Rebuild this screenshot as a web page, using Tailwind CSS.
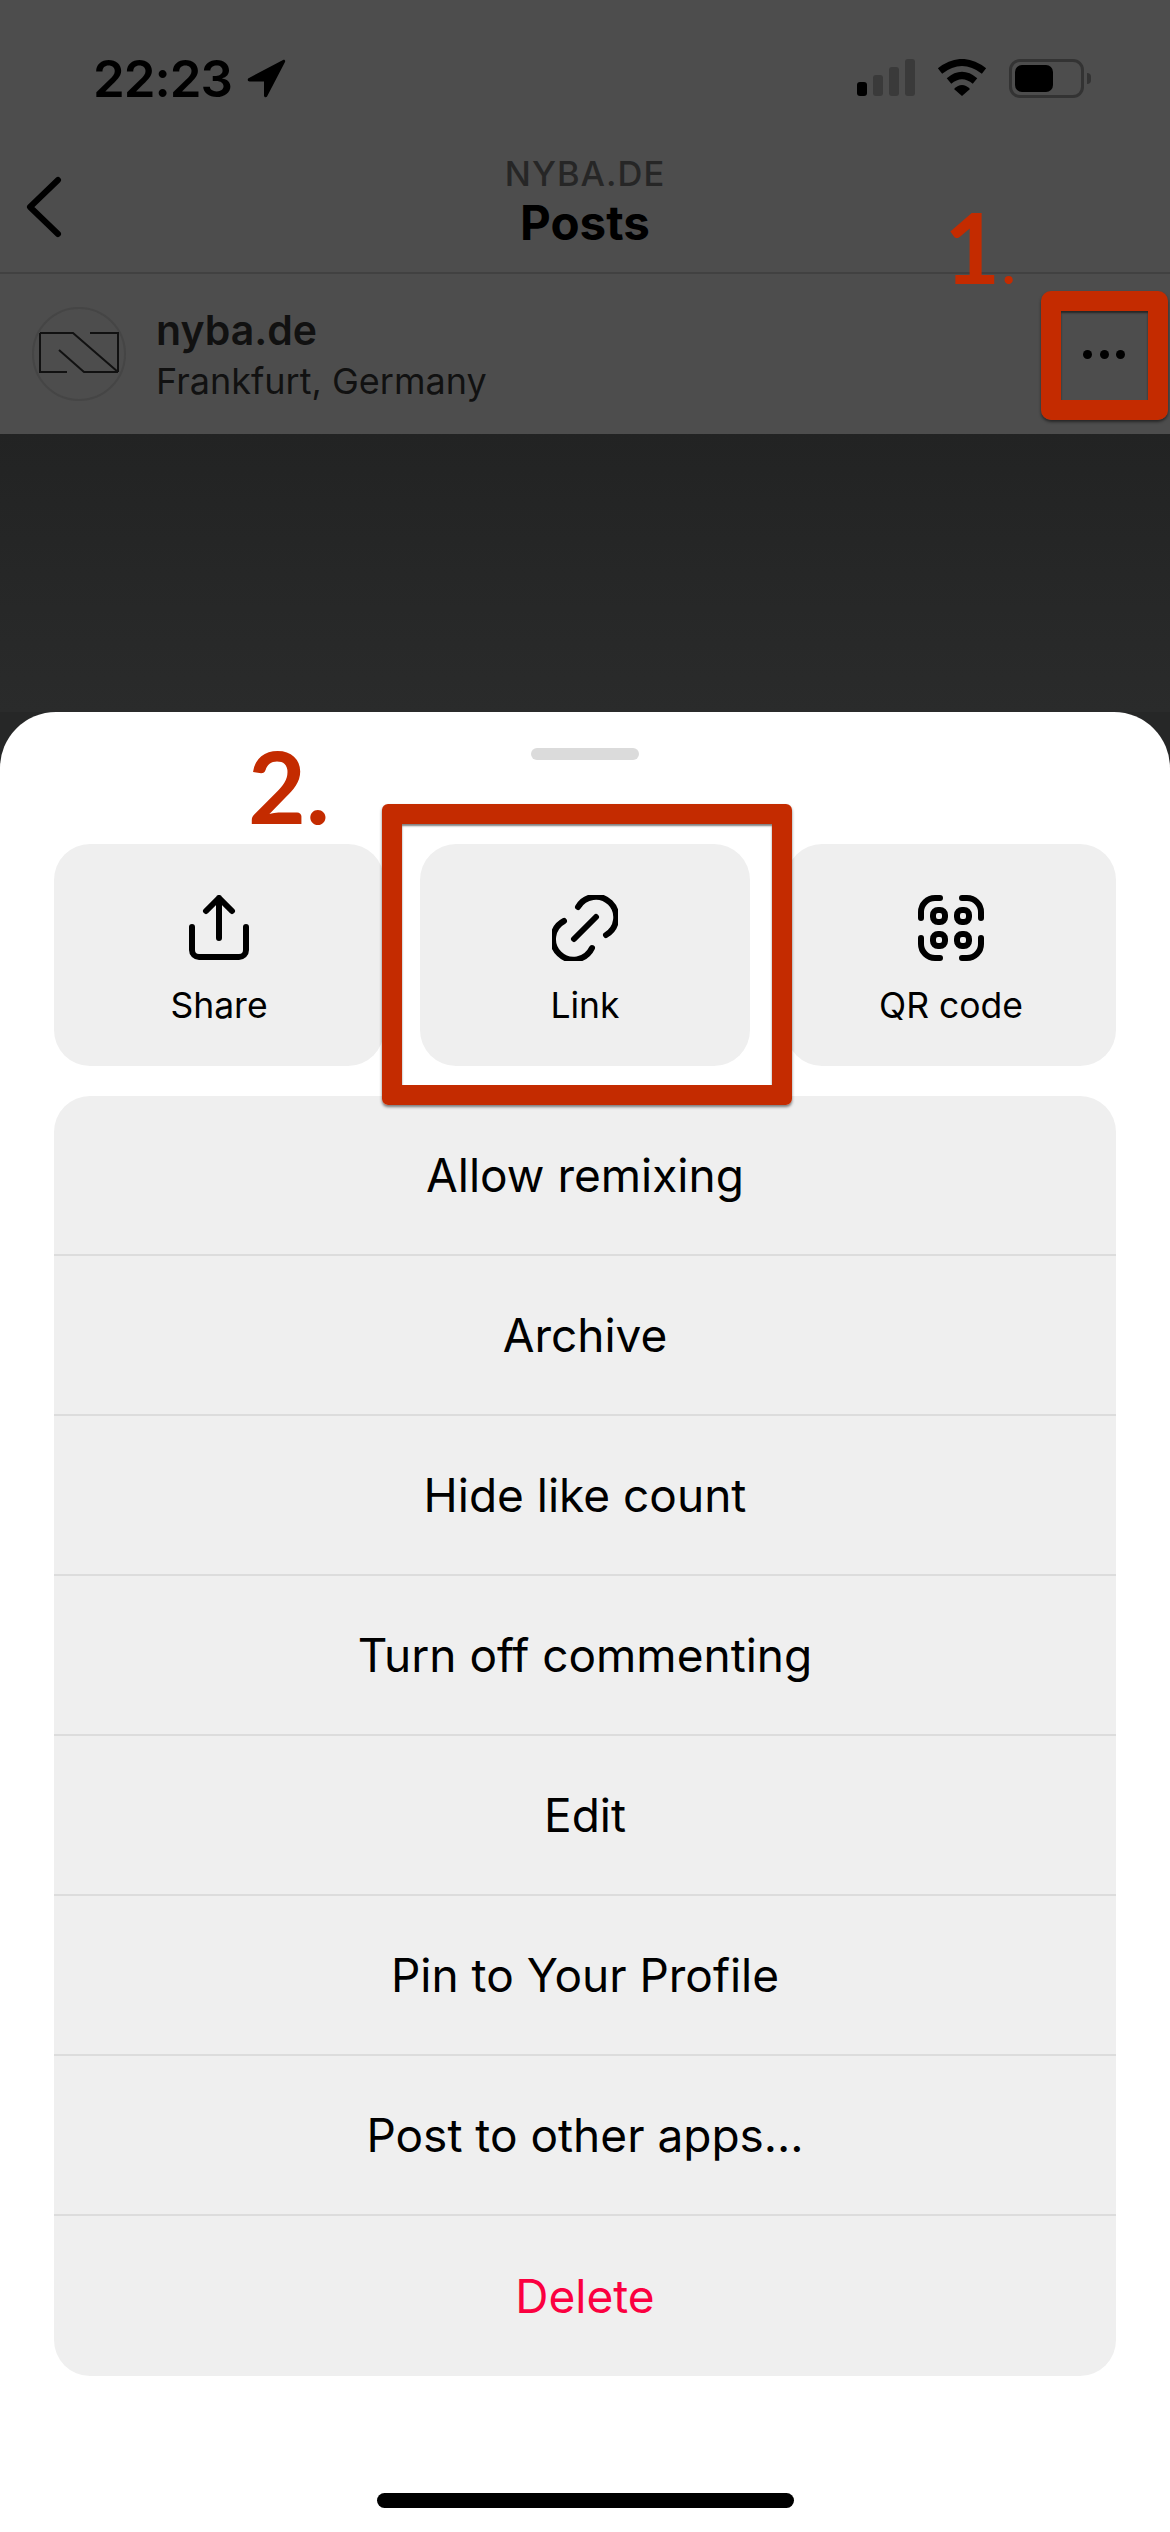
<!DOCTYPE html>
<html lang="en">
<head>
    <meta charset="UTF-8">
    <meta name="viewport" content="width=device-width, initial-scale=1.0">
    <title>Posts</title>
    <script src="https://cdn.jsdelivr.net/npm/@tailwindcss/browser@4"></script>
</head>
<body class="bg-[#262727] font-['Inter','Liberation_Sans',sans-serif]">
    <div class="relative w-[1170px] h-[2532px] overflow-hidden flex flex-col">

        <!-- dimmed top part -->
        <div class="bg-[#4d4d4d] h-[434px] flex flex-col shrink-0">
            <div class="h-[150px] pl-[93px] pr-[79px] pt-[54px] flex items-start justify-between shrink-0">
                <div class="flex items-center gap-[14px] h-[48px]">
                    <span class="text-[51px] leading-none font-semibold text-black tracking-[-1px]">22:23</span>
                    <svg class="w-[40px] h-[40px]" viewBox="0 0 40 40"><path d="M37 2 3 20c-2 1-1.500 3.500.6 3.500H18v14c0 2 2.500 2.500 3.300.6L39 4c.6-1.600-.6-2.800-2-2Z" fill="#000"/></svg>
                </div>
                <div class="flex items-center gap-[22px] h-[48px]">
                    <svg class="w-[58px] h-[38px]" viewBox="0 0 58 38">
                        <rect x="0" y="23" width="10" height="14" rx="3" fill="#000"/>
                        <rect x="16" y="16" width="10" height="21" rx="3" fill="#3a3a3a"/>
                        <rect x="32" y="8" width="10" height="29" rx="3" fill="#3a3a3a"/>
                        <rect x="48" y="0" width="10" height="37" rx="3" fill="#3a3a3a"/>
                    </svg>
                    <svg class="w-[50px] h-[38px]" viewBox="0 0 50 38">
                        <path d="M3 12Q25-5 47 12" fill="none" stroke="#000" stroke-width="7"/>
                        <path d="M12 22Q25 11 38 22" fill="none" stroke="#000" stroke-width="7"/>
                        <path d="M17 30Q25 22 33 30L25 37Z" fill="#000"/>
                    </svg>
                    <div class="flex items-center gap-[3px]">
                        <div class="w-[75px] h-[39px] rounded-[11px] border-[3px] border-[#333333] p-[3px]">
                            <div class="w-[38px] h-full rounded-[7px] bg-black"></div>
                        </div>
                        <div class="w-[4px] h-[11px] rounded-r-full bg-[#333333]"></div>
                    </div>
                </div>
            </div>

            <div class="relative h-[124px] flex flex-col items-center border-b-2 border-[#414141] shrink-0">
                <svg class="absolute left-[23px] top-[26px] w-[40px] h-[62px]" viewBox="0 0 40 62"><path d="M35 4 7 31l28 27" fill="none" stroke="#000" stroke-width="6" stroke-linecap="round" stroke-linejoin="round"/></svg>
                <div class="text-[34.500px] leading-[36px] mt-[6px] text-[#262626] font-medium tracking-[1px]">NYBA.DE</div>
                <div class="text-[47.500px] leading-[54px] mt-[4px] text-black font-bold">Posts</div>
            </div>

            <div class="flex-1 flex items-center pl-[32px] pr-[45px]">
                <div class="w-[94px] h-[94px] rounded-full border-2 border-[#454545] flex items-center justify-center shrink-0">
                    <svg class="w-[82px] h-[44px]" viewBox="0 0 82 44">
                        <path d="M2 1H35L80 40M52 1H80V40M2 1V40H29M21 18 46 40H80" fill="none" stroke="#111" stroke-width="2"/>
                    </svg>
                </div>
                <div class="ml-[30px] flex flex-col">
                    <div class="text-[41px] leading-[48px] font-semibold text-[#111111]">nyba.de</div>
                    <div class="text-[36px] leading-[42px] mt-[6px] text-[#111111]">Frankfurt, Germany</div>
                </div>
                <div class="ml-auto flex gap-[7.500px]">
                    <span class="w-[9px] h-[9px] rounded-full bg-black"></span>
                    <span class="w-[9px] h-[9px] rounded-full bg-black"></span>
                    <span class="w-[9px] h-[9px] rounded-full bg-black"></span>
                </div>
            </div>
        </div>

        <!-- dark gap over the post -->
        <div class="h-[278px] shrink-0 bg-linear-to-b from-[#222323] to-[#2a2b2b]"></div>

        <!-- bottom sheet -->
        <div class="flex-1 bg-white rounded-t-[56px] flex flex-col px-[54px]">
            <div class="w-[108px] h-[12px] rounded-full bg-[#dbdbdb] mt-[36px] mx-auto shrink-0"></div>

            <div class="grid grid-cols-3 gap-[36px] mt-[84px]">
                <div class="h-[222px] rounded-[36px] bg-[#efefef] flex flex-col items-center pt-[51px]">
                    <svg class="w-[66px] h-[66px]" viewBox="0 0 66 66"><path d="M33 43V3M20 16 33 3l13 13M6 32v23c0 4 3 7 7 7h40c4 0 7-3 7-7V32" fill="none" stroke="#000" stroke-width="6" stroke-linecap="round" stroke-linejoin="round"/></svg>
                    <div class="text-[35.500px] leading-[40px] mt-[25px] text-black">Share</div>
                </div>
                <div class="h-[222px] rounded-[36px] bg-[#efefef] flex flex-col items-center pt-[51px]">
                    <svg class="w-[66px] h-[66px]" viewBox="0 0 66 66"><path d="M26 12A20.500 20.500 0 1 1 54 40M44 22 22 44M12 26A20.500 20.500 0 1 0 40 53" fill="none" stroke="#000" stroke-width="6" stroke-linecap="round"/></svg>
                    <div class="text-[35.500px] leading-[40px] mt-[25px] text-black">Link</div>
                </div>
                <div class="h-[222px] rounded-[36px] bg-[#efefef] flex flex-col items-center pt-[51px]">
                    <svg class="w-[66px] h-[66px]" viewBox="0 0 66 66">
                        <path d="M3 23V17A14 14 0 0 1 17 3H22M44 3H49A14 14 0 0 1 63 17V23M3 43V49A14 14 0 0 0 17 63H22M44 63H49A14 14 0 0 0 63 49V43" fill="none" stroke="#000" stroke-width="6" stroke-linecap="round"/>
                        <rect x="15" y="15" width="12" height="12" rx="5" fill="none" stroke="#000" stroke-width="6"/>
                        <rect x="39" y="15" width="12" height="12" rx="5" fill="none" stroke="#000" stroke-width="6"/>
                        <rect x="15" y="39" width="12" height="12" rx="5" fill="none" stroke="#000" stroke-width="6"/>
                        <rect x="39" y="39" width="12" height="12" rx="5" fill="none" stroke="#000" stroke-width="6"/>
                    </svg>
                    <div class="text-[35.500px] leading-[40px] mt-[25px] text-black">QR code</div>
                </div>
            </div>

            <div class="mt-[30px] rounded-[36px] bg-[#efefef] flex flex-col divide-y-2 divide-[#dcdcdc] overflow-hidden">
                <div class="h-[160px] flex items-center justify-center text-[46px] text-black">Allow remixing</div>
                <div class="h-[160px] flex items-center justify-center text-[46px] text-black">Archive</div>
                <div class="h-[160px] flex items-center justify-center text-[46px] text-black">Hide like count</div>
                <div class="h-[160px] flex items-center justify-center text-[46px] text-black">Turn off commenting</div>
                <div class="h-[160px] flex items-center justify-center text-[46px] text-black">Edit</div>
                <div class="h-[160px] flex items-center justify-center text-[46px] text-black">Pin to Your Profile</div>
                <div class="h-[160px] flex items-center justify-center text-[46px] text-black">Post to other apps...</div>
                <div class="h-[160px] flex items-center justify-center text-[46px] text-[#fb0040]">Delete</div>
            </div>

            <div class="mt-auto mb-[24px] w-[417px] h-[15px] rounded-full bg-black mx-auto shrink-0"></div>
        </div>

        <!-- red annotations on top of the screenshot -->
        <div class="absolute left-[1041px] top-[291px] w-[127px] h-[129px] rounded-[10px] border-[20px] border-[#c42b00] shadow-[0_2px_3px_rgba(0,0,0,0.5),inset_0_2px_2px_rgba(0,0,0,0.5)]"></div>
        <div class="absolute left-[382px] top-[804px] w-[410px] h-[301px] rounded-[6px] border-[20px] border-[#c42b00] shadow-[0_2px_3px_rgba(0,0,0,0.5),inset_0_2px_2px_rgba(0,0,0,0.5)]"></div>
        <div class="absolute left-[944px] top-[192px] font-['Lato',sans-serif] font-bold text-[97px] leading-[110px] text-[#c42b00]">1<span class="text-[54px] ml-[2px]">.</span></div>
        <div class="absolute left-[248px] top-[730px] font-['Lato',sans-serif] font-bold text-[100px] leading-[110px] text-[#c42b00]">2.</div>
    </div>
</body>
</html>
